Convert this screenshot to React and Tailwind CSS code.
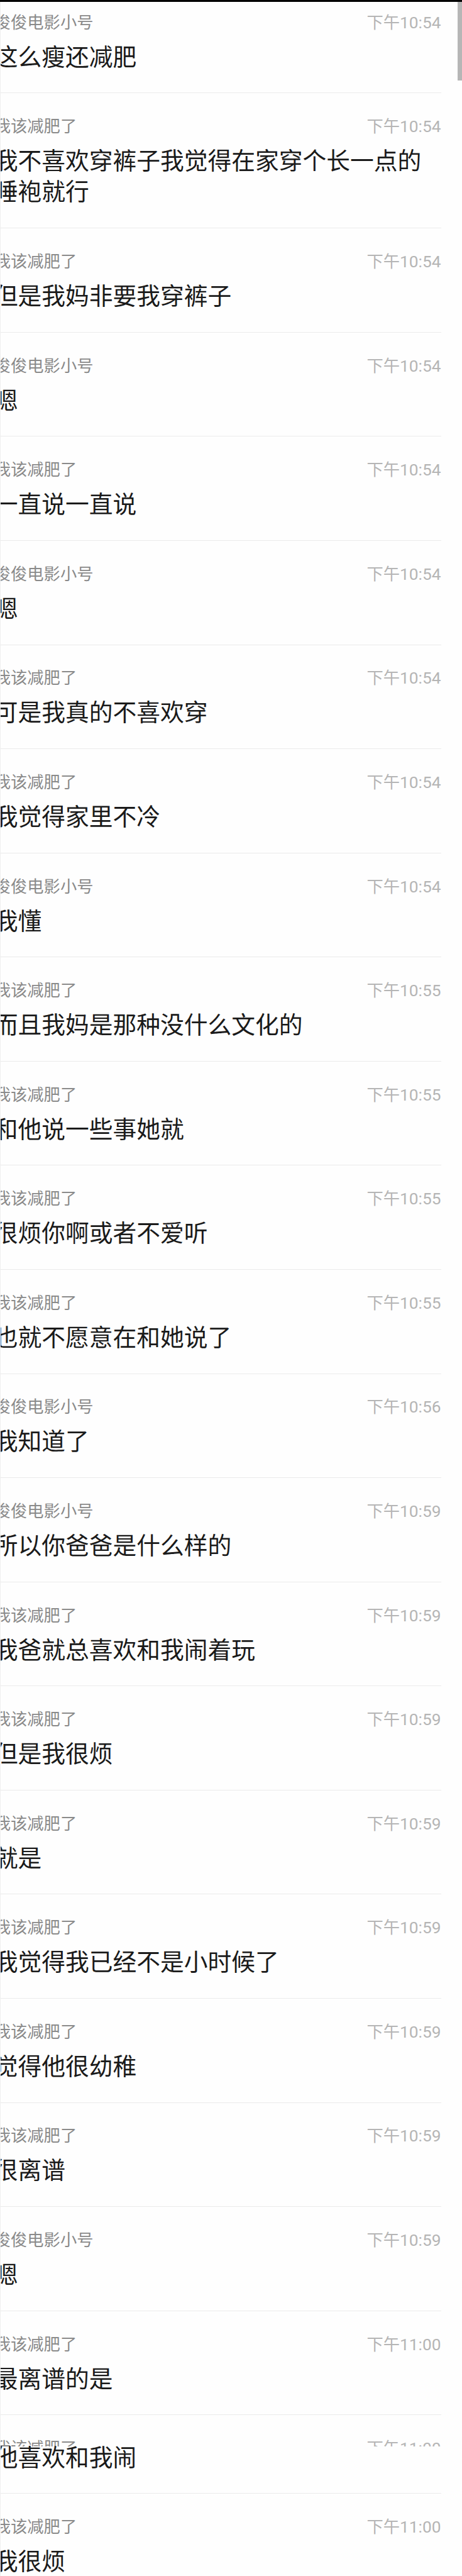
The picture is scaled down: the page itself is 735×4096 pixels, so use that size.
import clsx from 'clsx'

const ME = '我该减肥了'
const OTHER = '俊俊电影小号'

const messages = [
  { from: OTHER, time: '10:54', text: ['这么瘦还减肥'] },
  {
    from: ME,
    time: '10:54',
    text: ['我不喜欢穿裤子我觉得在家穿个长一点的', '睡袍就行'],
  },
  { from: ME, time: '10:54', text: ['但是我妈非要我穿裤子'] },
  { from: OTHER, time: '10:54', text: ['嗯'] },
  { from: ME, time: '10:54', text: ['一直说一直说'] },
  { from: OTHER, time: '10:54', text: ['嗯'] },
  { from: ME, time: '10:54', text: ['可是我真的不喜欢穿'] },
  { from: ME, time: '10:54', text: ['我觉得家里不冷'] },
  { from: OTHER, time: '10:54', text: ['我懂'] },
  { from: ME, time: '10:55', text: ['而且我妈是那种没什么文化的'] },
  { from: ME, time: '10:55', text: ['和他说一些事她就'] },
  { from: ME, time: '10:55', text: ['很烦你啊或者不爱听'] },
  { from: ME, time: '10:55', text: ['也就不愿意在和她说了'] },
  { from: OTHER, time: '10:56', text: ['我知道了'] },
  { from: OTHER, time: '10:59', text: ['所以你爸爸是什么样的'] },
  { from: ME, time: '10:59', text: ['我爸就总喜欢和我闹着玩'] },
  { from: ME, time: '10:59', text: ['但是我很烦'] },
  { from: ME, time: '10:59', text: ['就是'] },
  { from: ME, time: '10:59', text: ['我觉得我已经不是小时候了'] },
  { from: ME, time: '10:59', text: ['觉得他很幼稚'] },
  { from: ME, time: '10:59', text: ['很离谱'] },
  { from: OTHER, time: '10:59', text: ['嗯'] },
  { from: ME, time: '11:00', text: ['最离谱的是'] },
  { from: ME, time: '11:00', text: ['他喜欢和我闹'], cut: true },
  { from: ME, time: '11:00', text: ['我很烦'] },
]

const Message = ({ message, first }) => {
  const { from, time, text, cut } = message
  return (
    <li
      className={clsx(
        'border-b border-[#ebebeb] pb-[31.6px] shrink-0',
        first ? 'pt-[15.7px]' : 'pt-[35.8px]',
      )}
    >
      <div
        className={clsx(
          'flex justify-between overflow-hidden text-[26.3px] leading-[34px] whitespace-nowrap',
          cut ? 'h-[14px]' : 'h-[34px]',
        )}
      >
        <span className="-ml-[10.3px] text-[#8a8a8a]">{from}</span>
        <span className="text-[#b5b5b5]">下午{time}</span>
      </div>
      <div
        className={clsx(
          '-ml-[10.3px] text-[37.75px] text-[#1a1a1a] whitespace-nowrap',
          cut ? '-mt-[6.5px]' : 'mt-[14px]',
        )}
      >
        {text.map((line) => (
          <p key={line} className="h-[49.2px] leading-[49px]">
            {line}
          </p>
        ))}
      </div>
    </li>
  )
}

export default function App() {
  return (
    <div className="relative flex h-[4096px] w-[735px] flex-col overflow-hidden border-t-[3px] border-black bg-[#fefefe] font-[Roboto,'Noto_Sans_CJK_SC',sans-serif]">
      <ul className="flex grow flex-col overflow-hidden border-l border-[#efefef] pr-[33.5px]">
        {messages.map((message, i) => (
          <Message key={i} message={message} first={i === 0} />
        ))}
      </ul>
      {/* scrollbar thumb */}
      <div className="absolute top-0 right-0 h-[124.5px] w-[7px] bg-[#b6b6b6]" />
    </div>
  )
}
